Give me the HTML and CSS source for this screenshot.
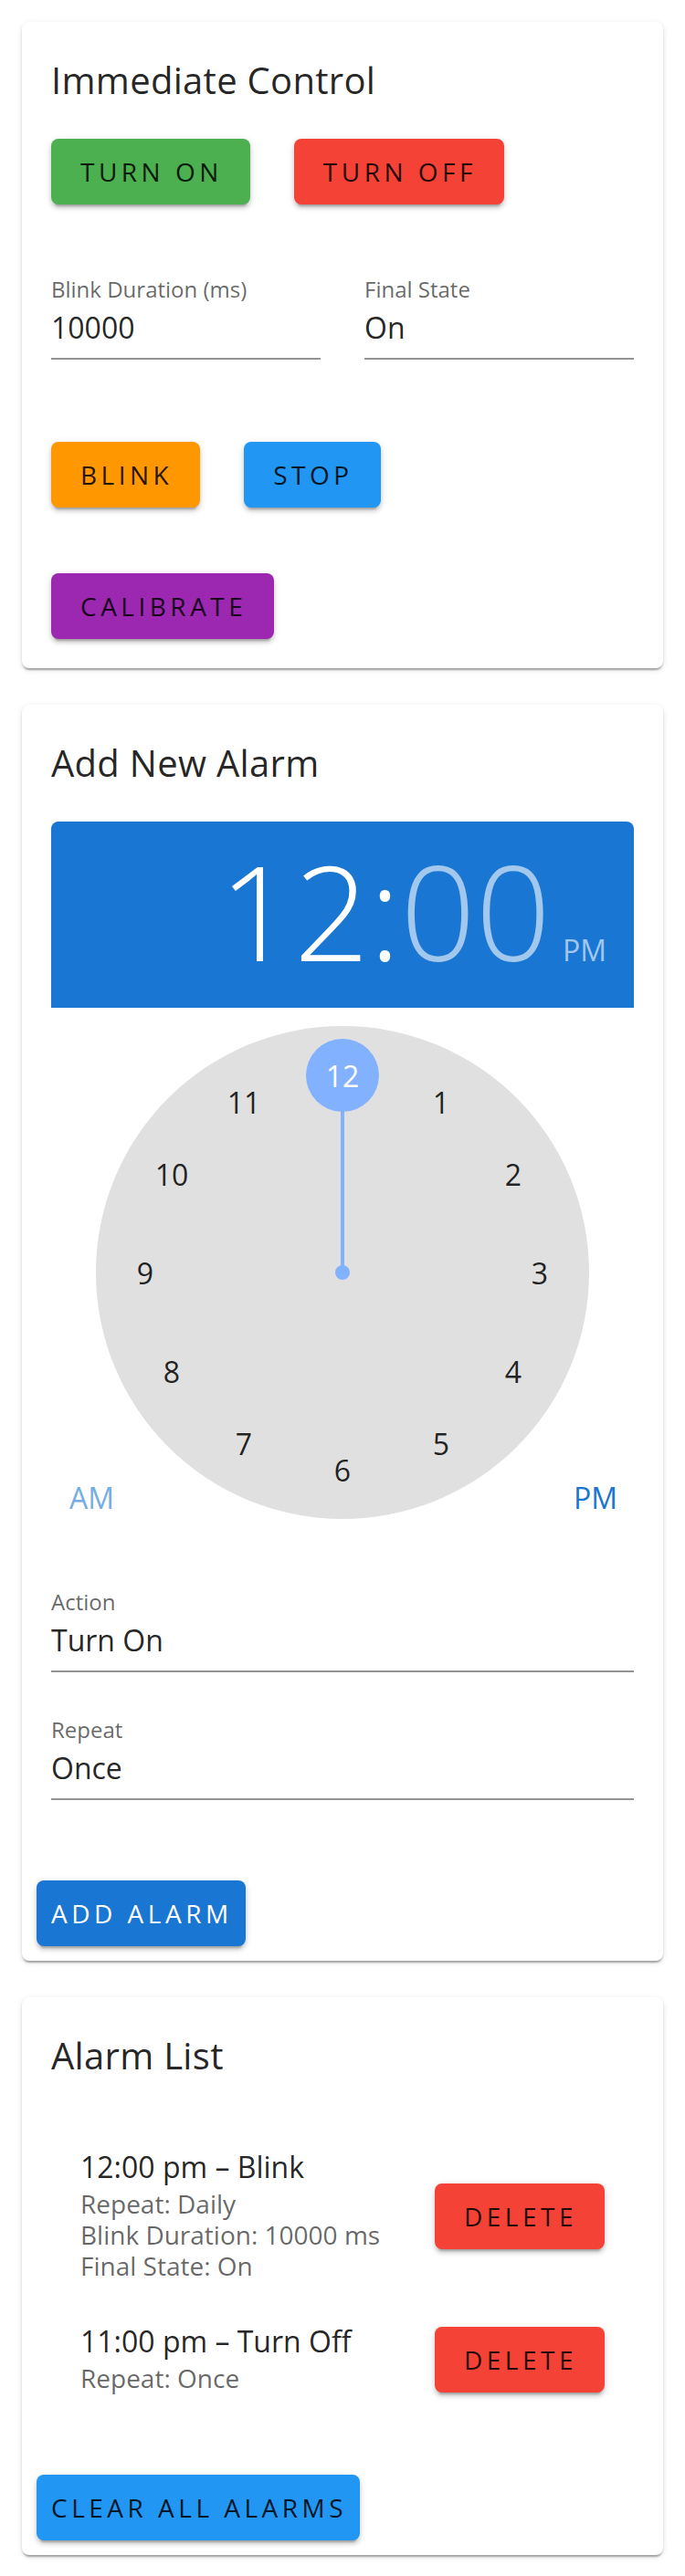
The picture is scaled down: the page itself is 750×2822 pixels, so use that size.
FILE: index.html
```html
<!DOCTYPE html>
<html lang="en">
<head>
<meta charset="utf-8">
<title>Light Control</title>
<link rel="stylesheet" href="styles.css">
</head>
<body>
<div class="page">
  <section class="card">
    <div class="content c1">
      <h2 class="title">Immediate Control</h2>
      <div class="btn-row">
        <button class="btn green">Turn On</button>
        <button class="btn red">Turn Off</button>
      </div>
      <div class="field-row">
        <div class="field">
          <div class="label">Blink Duration (ms)</div>
          <div class="input">10000</div>
        </div>
        <div class="field">
          <div class="label">Final State</div>
          <div class="input">On</div>
        </div>
      </div>
      <div class="btn-row r2">
        <button class="btn orange">Blink</button>
        <button class="btn blue">Stop</button>
      </div>
      <div class="btn-row r3">
        <button class="btn purple">Calibrate</button>
      </div>
    </div>
  </section>

  <section class="card">
    <div class="content c2">
      <h2 class="title">Add New Alarm</h2>
      <div class="time-bar">
        <span class="t-hour">12</span><span class="t-sep">:</span><span class="t-min">00</span><span class="t-ampm">PM</span>
      </div>
      <div class="clock-wrap">
        <div class="clock">
          <div class="hand"></div>
          <div class="dot"></div>
          <span class="num sel" style="left:270px;top:54px">12</span>
          <span class="num" style="left:378px;top:83px">1</span>
          <span class="num" style="left:457px;top:162px">2</span>
          <span class="num" style="left:486px;top:270px">3</span>
          <span class="num" style="left:457px;top:378px">4</span>
          <span class="num" style="left:378px;top:457px">5</span>
          <span class="num" style="left:270px;top:486px">6</span>
          <span class="num" style="left:162px;top:457px">7</span>
          <span class="num" style="left:83px;top:378px">8</span>
          <span class="num" style="left:54px;top:270px">9</span>
          <span class="num" style="left:83px;top:162px">10</span>
          <span class="num" style="left:162px;top:83px">11</span>
        </div>
        <span class="ampm am">AM</span>
        <span class="ampm pm">PM</span>
      </div>
      <div class="field f-action">
        <div class="label">Action</div>
        <div class="input">Turn On</div>
      </div>
      <div class="field f-repeat">
        <div class="label">Repeat</div>
        <div class="input">Once</div>
      </div>
    </div>
    <div class="actions">
      <button class="btn btn-sm primary">Add Alarm</button>
    </div>
  </section>

  <section class="card">
    <div class="content c3">
      <h2 class="title">Alarm List</h2>
      <ul class="list">
        <li class="item">
          <div class="item-text">
            <div class="primary-text">12:00 pm – Blink</div>
            <div class="secondary-text">Repeat: Daily</div>
            <div class="secondary-text">Blink Duration: 10000 ms</div>
            <div class="secondary-text">Final State: On</div>
          </div>
          <button class="btn red">Delete</button>
        </li>
        <li class="item">
          <div class="item-text">
            <div class="primary-text">11:00 pm – Turn Off</div>
            <div class="secondary-text">Repeat: Once</div>
          </div>
          <button class="btn red">Delete</button>
        </li>
      </ul>
    </div>
    <div class="actions">
      <button class="btn btn-sm blue">Clear All Alarms</button>
    </div>
  </section>
</div>
</body>
</html>
```

FILE: styles.css
```css
* { box-sizing: border-box; }
html, body { margin: 0; padding: 0; background: #fff; }
body {
  font-family: "Open Sans", "Noto Sans", sans-serif;
  color: rgba(0, 0, 0, 0.87);
}
.page {
  padding: 24px;
  display: flex;
  flex-direction: column;
  gap: 40px;
}
.card {
  background: #fff;
  border-radius: 8px;
  box-shadow: 0 4px 2px -2px rgba(0,0,0,0.2), 0 2px 2px 0 rgba(0,0,0,0.14), 0 2px 6px 0 rgba(0,0,0,0.12);
}
.content { padding: 32px; }
.c2 { padding-bottom: 72px; }
.c3 { padding-bottom: 52px; }
.title {
  margin: 0 0 32px;
  font-size: 40px;
  line-height: 64px;
  font-weight: 500;
  letter-spacing: 0.3px;
  color: rgba(0,0,0,0.87);
}
.btn-row { display: flex; gap: 48px; }
.r2 { margin-top: 90px; }
.r3 { margin-top: 72px; }
.btn {
  height: 72px;
  padding: 0 30px 0 32px;
  border: none;
  border-radius: 8px;
  font-family: inherit;
  font-size: 28px;
  font-weight: 500;
  line-height: 72px;
  letter-spacing: 4.5px;
  text-transform: uppercase;
  color: rgba(0,0,0,0.87);
  box-shadow: 0 6px 2px -4px rgba(0,0,0,0.2), 0 4px 4px 0 rgba(0,0,0,0.14), 0 2px 10px 0 rgba(0,0,0,0.12);
  white-space: nowrap;
  flex: none;
}
.btn-sm { padding: 0 14px 0 16px; }
.green { background: #4caf50; }
.red { background: #f44336; }
.orange { background: #ff9800; }
.blue { background: #2196f3; }
.purple { background: #9c27b0; }
.primary { background: #1976d2; color: #fff; }

.field-row {
  display: flex;
  gap: 48px;
  margin-top: 76px;
}
.field-row .field { flex: 1; }
.label {
  font-size: 24px;
  line-height: 34px;
  color: rgba(0,0,0,0.6);
}
.input {
  padding: 2px 0 10px;
  font-size: 32px;
  line-height: 46px;
  border-bottom: 2px solid rgba(0,0,0,0.42);
  color: rgba(0,0,0,0.87);
}
.f-action { margin-top: 74px; }
.f-repeat { margin-top: 46px; }

.time-bar {
  height: 204px;
  background: #1976d2;
  border-radius: 8px 8px 0 0;
  display: flex;
  justify-content: flex-end;
  align-items: baseline;
  padding: 25px 30px 0 0;
  color: #fff;
  font-weight: 300;
}
.t-hour, .t-sep, .t-min {
  font-size: 144px;
  line-height: 144px;
}
.t-min { color: rgba(255,255,255,0.6); }
.t-ampm {
  font-size: 32px;
  line-height: 44px;
  margin-left: 13px;
  color: rgba(255,255,255,0.6);
  font-weight: 400;
}

.clock-wrap {
  position: relative;
  height: 540px;
  margin-top: 20px;
}
.clock {
  position: relative;
  width: 540px;
  height: 540px;
  margin: 0 auto;
  border-radius: 50%;
  background: #e0e0e0;
}
.hand {
  position: absolute;
  left: 268px;
  top: 54px;
  width: 4px;
  height: 216px;
  background: #82b1ff;
}
.dot {
  position: absolute;
  left: 262px;
  top: 262px;
  width: 16px;
  height: 16px;
  border-radius: 50%;
  background: #82b1ff;
}
.num {
  position: absolute;
  width: 80px;
  height: 80px;
  margin: -40px 0 0 -40px;
  border-radius: 50%;
  display: flex;
  align-items: center;
  justify-content: center;
  font-size: 32px;
  color: rgba(0,0,0,0.87);
}
.num.sel { background: #82b1ff; color: #fff; }
.ampm {
  position: absolute;
  top: 493px;
  font-size: 32px;
  line-height: 48px;
}
.am { left: 20px; color: #75ade4; }
.pm { right: 18px; color: #1976d2; }

.actions { padding: 16px; display: flex; }

.list {
  list-style: none;
  margin: 0;
  padding: 19px 0 0;
  display: flex;
  flex-direction: column;
  gap: 6px;
}
.item {
  display: flex;
  align-items: center;
  justify-content: space-between;
  padding: 16px 32px;
}
.item-text { padding-bottom: 5px; }
.primary-text {
  font-size: 32px;
  line-height: 46px;
  color: rgba(0,0,0,0.87);
}
.secondary-text {
  font-size: 28px;
  line-height: 34px;
  color: rgba(0,0,0,0.6);
}
```
